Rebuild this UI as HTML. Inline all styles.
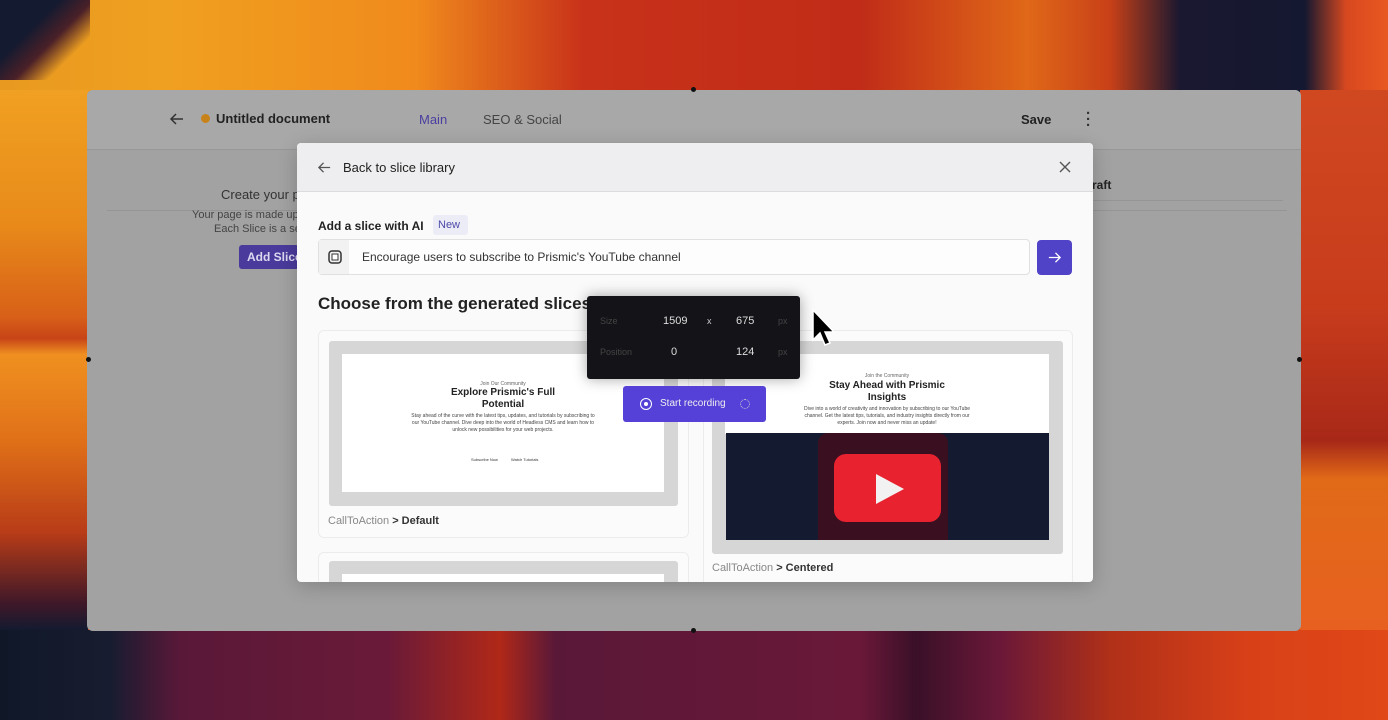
<!DOCTYPE html>
<html><head><meta charset="utf-8"><style>
*{margin:0;padding:0;box-sizing:border-box}
body{width:1388px;height:720px;overflow:hidden;font-family:"Liberation Sans",sans-serif;position:relative;background:#c84018}
.bg{position:absolute}
.win{position:absolute;left:87px;top:90px;width:1214px;height:541px;background:#a2a2a2;border-radius:6px;overflow:hidden}
.t{position:absolute;white-space:nowrap}
.modal{position:absolute;left:297px;top:143px;width:796px;height:439px;background:#fafafa;border-radius:4px;overflow:hidden;box-shadow:0 4px 20px rgba(0,0,0,.2)}
.card{position:absolute;border:1px solid #ececec;border-radius:6px;background:#fbfbfb}
.gray{position:absolute;background:#d6d6d6;border-radius:3px}
.white{position:absolute;background:#fff}
.s{position:absolute;text-align:center;color:#222}
</style></head><body>
<div class="bg" style="left:0;top:0;width:1388px;height:92px;background:linear-gradient(90deg,#e89a20 0%,#f0a020 12%,#f08a1c 30%,#c8321a 42%,#c02c18 62%,#e06818 74%,#c84018 80%,#1a1830 85%,#141830 94%,#d84820 97%,#e85820 100%)"></div>
<div class="bg" style="left:0;top:0;width:90px;height:80px;background:linear-gradient(135deg,#141a30 0%,#141a30 35%,#4a2028 55%,transparent 75%)"></div>
<div class="bg" style="left:0;top:90px;width:88px;height:540px;background:linear-gradient(180deg,#f0a022 0%,#e88a1a 25%,#d86018 42%,#c84418 46%,#f09020 49%,#e07018 65%,#b83c18 82%,#401828 95%,#141a30 100%)"></div>
<div class="bg" style="left:1300px;top:90px;width:88px;height:540px;background:linear-gradient(180deg,#d04820 0%,#c83c1c 40%,#a82818 65%,#e06a18 72%,#e86020 100%)"></div>
<div class="bg" style="left:0;top:630px;width:1388px;height:90px;background:linear-gradient(90deg,#101828 0%,#181c30 8%,#5a1838 13%,#6a1a38 28%,#b02818 36%,#5a1838 40%,#6a1838 62%,#3a1028 66%,#6a1838 72%,#b03018 80%,#d84018 90%,#e04818 100%)"></div>
<div class="win">
  <div style="position:absolute;left:0;top:0;width:1214px;height:60px;background:#a8a8a8;border-bottom:1px solid #979797"></div>
  <svg class="t" style="left:82px;top:21px" width="16" height="16" viewBox="0 0 16 16"><path d="M14 8H2M7 3L2 8l5 5" stroke="#333" stroke-width="1.5" fill="none"/></svg>
  <div class="t" style="left:114px;top:24px;width:9px;height:9px;border-radius:50%;background:#c8821a"></div>
  <div class="t" style="left:129px;top:21px;font-size:13px;font-weight:bold;color:#222">Untitled document</div>
  <div class="t" style="left:332px;top:22px;font-size:13px;color:#4a3fa0">Main</div>
  <div class="t" style="left:396px;top:22px;font-size:13px;color:#444">SEO &amp; Social</div>
  <div class="t" style="left:934px;top:22px;font-size:13px;font-weight:bold;color:#222">Save</div>
  <div class="t" style="left:999px;top:21px;font-size:15px;font-weight:bold;color:#333;line-height:6px">·<br>·<br>·</div>
  <div class="t" style="left:20px;top:120px;width:1180px;height:1px;background:#959595"></div>
  <div class="t" style="left:134px;top:97px;font-size:13px;color:#333">Create your p</div>
  <div class="t" style="left:105px;top:119px;font-size:11px;color:#444">Your page is made up</div>
  <div class="t" style="left:127px;top:133px;font-size:11px;color:#444">Each Slice is a se</div>
  <div class="t" style="left:152px;top:155px;width:60px;height:24px;background:#4a3a9c;border-radius:3px;color:#dcd8f0;font-size:12px;font-weight:bold;padding:5px 8px">Add Slice</div>
  <div class="t" style="left:1005px;top:88px;font-size:12px;font-weight:bold;color:#222">raft</div>
  <div class="t" style="left:1006px;top:110px;width:190px;height:1px;background:#959595"></div>
</div>
<div class="modal">
  <div style="position:absolute;left:0;top:0;width:796px;height:49px;background:#eeeef0;border-bottom:1px solid #dcdcdc"></div>
  <svg class="t" style="left:20px;top:17px" width="15" height="15" viewBox="0 0 16 16"><path d="M14 8H2M7 3L2 8l5 5" stroke="#555" stroke-width="1.4" fill="none"/></svg>
  <div class="t" style="left:46px;top:17px;font-size:13px;color:#222">Back to slice library</div>
  <svg class="t" style="left:762px;top:18px" width="12" height="12" viewBox="0 0 12 12"><path d="M1 1l10 10M11 1L1 11" stroke="#555" stroke-width="1.4"/></svg>
  <div class="t" style="left:21px;top:76px;font-size:12px;font-weight:bold;color:#222">Add a slice with AI</div>
  <div class="t" style="left:136px;top:72px;width:35px;height:20px;background:#ececf6;border-radius:3px;font-size:11px;color:#4c4aa8;padding:4px 5px">New</div>
  <div class="t" style="left:21px;top:96px;width:712px;height:36px;border:1px solid #e0e0e0;border-radius:4px;background:#fdfdfd"></div>
  <div class="t" style="left:22px;top:97px;width:30px;height:34px;background:#f2f2f2"></div>
  <svg class="t" style="left:30px;top:106px" width="16" height="16" viewBox="0 0 16 16"><rect x="2" y="2" width="12" height="12" rx="3" stroke="#333" stroke-width="1.5" fill="none"/><rect x="5" y="5" width="6" height="6" fill="#fff" stroke="#333"/></svg>
  <div class="t" style="left:65px;top:107px;font-size:12px;color:#333">Encourage users to subscribe to Prismic's YouTube channel</div>
  <div class="t" style="left:740px;top:97px;width:35px;height:35px;background:#5143c8;border-radius:4px"></div>
  <svg class="t" style="left:750px;top:107px" width="15" height="15" viewBox="0 0 16 16"><path d="M2 8h12M9 3l5 5-5 5" stroke="#fff" stroke-width="1.4" fill="none"/></svg>
  <div class="t" style="left:21px;top:151px;font-size:17px;font-weight:bold;color:#222">Choose from the generated slices</div>
  <div class="card" style="left:21px;top:187px;width:371px;height:208px"></div>
  <div class="gray" style="left:32px;top:198px;width:349px;height:165px"></div>
  <div class="white" style="left:45px;top:211px;width:322px;height:138px"></div>
  <div class="s" style="left:45px;top:238px;width:322px;font-size:5px;color:#666">Join Our Community</div>
  <div class="s" style="left:45px;top:244px;width:322px;font-size:10px;font-weight:bold;line-height:12px">Explore Prismic's Full<br>Potential</div>
  <div class="s" style="left:110px;top:270px;width:192px;font-size:5px;line-height:7px;color:#444">Stay ahead of the curve with the latest tips, updates, and tutorials by subscribing to our YouTube channel. Dive deep into the world of Headless CMS and learn how to unlock new possibilities for your web projects.</div>
  <div class="t" style="left:174px;top:314px;font-size:4px;color:#333">Subscribe Now</div>
  <div class="t" style="left:214px;top:314px;font-size:4px;color:#333">Watch Tutorials</div>
  <div class="t" style="left:31px;top:372px;font-size:11px;color:#888">CallToAction <b style="color:#333">&gt; Default</b></div>
  <div class="card" style="left:21px;top:409px;width:371px;height:60px"></div>
  <div class="gray" style="left:32px;top:418px;width:349px;height:40px"></div>
  <div class="white" style="left:45px;top:431px;width:322px;height:30px"></div>
  <div class="card" style="left:406px;top:187px;width:370px;height:270px"></div>
  <div class="gray" style="left:415px;top:198px;width:351px;height:213px"></div>
  <div class="white" style="left:428px;top:211px;width:324px;height:80px"></div>
  <div class="s" style="left:428px;top:230px;width:324px;font-size:5px;color:#666">Join the Community</div>
  <div class="s" style="left:428px;top:237px;width:324px;font-size:10px;font-weight:bold;line-height:12px">Stay Ahead with Prismic<br>Insights</div>
  <div class="s" style="left:500px;top:263px;width:180px;font-size:5px;line-height:7px;color:#444">Dive into a world of creativity and innovation by subscribing to our YouTube channel. Get the latest tips, tutorials, and industry insights directly from our experts. Join now and never miss an update!</div>
  <div class="t" style="left:429px;top:290px;width:323px;height:107px;background:#141a30"></div>
  <div class="t" style="left:521px;top:290px;width:130px;height:107px;background:#3a1020;border-radius:10px 10px 0 0"></div>
  <div class="t" style="left:537px;top:311px;width:107px;height:68px;background:#e8222e;border-radius:12px"></div>
  <svg class="t" style="left:577px;top:329px" width="32" height="34" viewBox="0 0 32 34"><path d="M2 2L30 17 2 32z" fill="#f2f2f2"/></svg>
  <div class="t" style="left:415px;top:419px;font-size:11px;color:#888">CallToAction <b style="color:#333">&gt; Centered</b></div>
</div>
<div class="t" style="left:587px;top:296px;width:213px;height:83px;background:#141318;border-radius:3px;box-shadow:0 0 14px rgba(0,0,0,.35)"></div>
<div class="t" style="left:600px;top:316px;font-size:9px;color:#444">Size</div>
<div class="t" style="left:663px;top:315px;font-size:11px;color:#ddd">1509</div>
<div class="t" style="left:707px;top:316px;font-size:9px;color:#ccc">x</div>
<div class="t" style="left:736px;top:315px;font-size:11px;color:#ddd">675</div>
<div class="t" style="left:778px;top:316px;font-size:9px;color:#444">px</div>
<div class="t" style="left:600px;top:347px;font-size:9px;color:#444">Position</div>
<div class="t" style="left:671px;top:346px;font-size:11px;color:#ddd">0</div>
<div class="t" style="left:736px;top:346px;font-size:11px;color:#ddd">124</div>
<div class="t" style="left:778px;top:347px;font-size:9px;color:#444">px</div>
<div class="t" style="left:623px;top:386px;width:143px;height:36px;background:#5541d8;border-radius:3px"></div>
<div class="t" style="left:640px;top:398px;width:12px;height:12px;border:1.5px solid #fff;border-radius:50%"></div>
<div class="t" style="left:644px;top:402px;width:4px;height:4px;background:#fff;border-radius:50%"></div>
<div class="t" style="left:660px;top:398px;font-size:10px;color:#eee">Start recording</div>
<div class="t" style="left:740px;top:399px;width:10px;height:10px;border:1px dotted #ccc;border-radius:50%"></div>
<svg class="t" style="left:811px;top:308px" width="24" height="40" viewBox="0 0 24 40"><path d="M2 2v30l7-7 5 12 5-2-5-11h9z" fill="#000" stroke="#fff" stroke-width="1.5"/></svg>
<div class="t" style="left:691px;top:87px;width:5px;height:5px;background:#111;border-radius:50%"></div>
<div class="t" style="left:691px;top:628px;width:5px;height:5px;background:#111;border-radius:50%"></div>
<div class="t" style="left:86px;top:357px;width:5px;height:5px;background:#111;border-radius:50%"></div>
<div class="t" style="left:1297px;top:357px;width:5px;height:5px;background:#111;border-radius:50%"></div>
</body></html>
